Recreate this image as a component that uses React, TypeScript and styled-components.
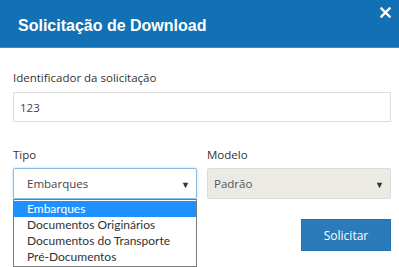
import React from 'react';
import styled, {createGlobalStyle} from "styled-components";

const Global = createGlobalStyle`
  html, body {
    margin: 0;
    padding: 0;
    background: #ffffff;
  }
  * {
    box-sizing: border-box;
  }
`;

const Modal = styled.div`
  width: 399px;
  height: 267px;
  overflow: hidden;
  background: #fff;
  font-family: "Open Sans", "Noto Sans", sans-serif;
  color: #333;
`;

const Header = styled.header`
  height: 48px;
  background: #1271b4;
  border-bottom: 1px solid #3a8cc6;
  display: flex;
  justify-content: space-between;
  align-items: flex-start;
  padding: 0 7px 0 18px;
`;

const Title = styled.h4`
  margin: 0;
  padding-top: 16px;
  font-family: "Liberation Sans", Arial, sans-serif;
  font-weight: bold;
  font-size: 16px;
  line-height: 20px;
  color: #fff;
`;

const Close = styled.button`
  border: 0;
  background: none;
  padding: 0;
  margin-top: 5px;
  width: 14px;
  height: 14px;
  cursor: pointer;
  display: flex;
  align-items: center;
  justify-content: center;
`;

const Body = styled.div`
  padding: 21px 8px 0 13px;
  display: flex;
  flex-direction: column;
`;

const Label = styled.label<{ $gap?: number }>`
  display: block;
  font-size: 11.5px;
  line-height: 17px;
  color: #333;
  margin-bottom: ${p => p.$gap ?? 6}px;
`;

const Input = styled.div`
  height: 30px;
  border: 1px solid #dcdcdc;
  border-radius: 1px;
  padding: 0 6px;
  display: flex;
  align-items: center;
  font-size: 11.5px;
  color: #444;
`;

const Row = styled.div`
  margin-top: 24px;
  display: grid;
  grid-template-columns: 1fr 1fr;
  column-gap: 10px;
`;

const Field = styled.div`
  position: relative;
`;

const Select = styled.div<{ $disabled?: boolean; $focus?: boolean }>`
  height: 31px;
  border: 1px solid ${p => p.$focus ? "#8cbbe6" : "#dcdcd6"};
  box-shadow: ${p => p.$focus ? "0 0 3px rgba(102, 175, 233, 0.45)" : "none"};
  background: ${p => p.$disabled ? "#ebeae4" : "#fff"};
  border-radius: 2px;
  padding: 0 6px 0 ${p => p.$disabled ? 6 : 13}px;
  display: flex;
  align-items: center;
  justify-content: space-between;
  font-size: 11.5px;
  color: ${p => p.$disabled ? "#555" : "#444"};
`;

const Arrow = styled.span`
  font-size: 9px;
  color: #333;
  margin-top: 1px;
`;

const List = styled.ul`
  position: absolute;
  left: 0;
  right: 0;
  top: 31px;
  margin: 0;
  padding: 1px 0;
  list-style: none;
  background: #fff;
  border: 1px solid #7a7a7a;
  z-index: 2;
`;

const Option = styled.li<{ $active?: boolean }>`
  height: 16px;
  line-height: 16px;
  padding-left: 13px;
  font-family: Lato, "Open Sans", sans-serif;
  font-size: 12px;
  background: ${p => p.$active ? "#1e90ff" : "transparent"};
  color: ${p => p.$active ? "#fff" : "#333"};
`;

const Actions = styled.div`
  display: flex;
  justify-content: flex-end;
  margin-top: 20px;
`;

const Button = styled.button`
  width: 90px;
  height: 32px;
  border: 1px solid #2672ad;
  background: #2b7bba;
  color: #fff;
  font-family: "Open Sans", "Noto Sans", sans-serif;
  font-size: 12px;
  cursor: pointer;
`;

const tipos = ["Embarques", "Documentos Originários", "Documentos do Transporte", "Pré-Documentos"];

export default function App() {
    return <Modal>
        <Global/>
        <Header>
            <Title>Solicitação de Download</Title>
            <Close aria-label="Fechar">
                <svg width="11" height="11" viewBox="0 0 11 11">
                    <path d="M1.5 1.5 L9.5 9.5 M9.5 1.5 L1.5 9.5" stroke="#fff" strokeWidth="2.4" strokeLinecap="square"/>
                </svg>
            </Close>
        </Header>
        <Body>
            <Label>Identificador da solicitação</Label>
            <Input>123</Input>
            <Row>
                <Field>
                    <Label $gap={5}>Tipo</Label>
                    <Field>
                        <Select $focus>
                            <span>Embarques</span>
                            <Arrow>▼</Arrow>
                        </Select>
                        <List>
                            {tipos.map((t, i) => <Option key={t} $active={i === 0}>{t}</Option>)}
                        </List>
                    </Field>
                </Field>
                <Field>
                    <Label $gap={5}>Modelo</Label>
                    <Select $disabled>
                        <span>Padrão</span>
                        <Arrow>▼</Arrow>
                    </Select>
                    <Actions>
                        <Button>Solicitar</Button>
                    </Actions>
                </Field>
            </Row>
        </Body>
    </Modal>;
}
